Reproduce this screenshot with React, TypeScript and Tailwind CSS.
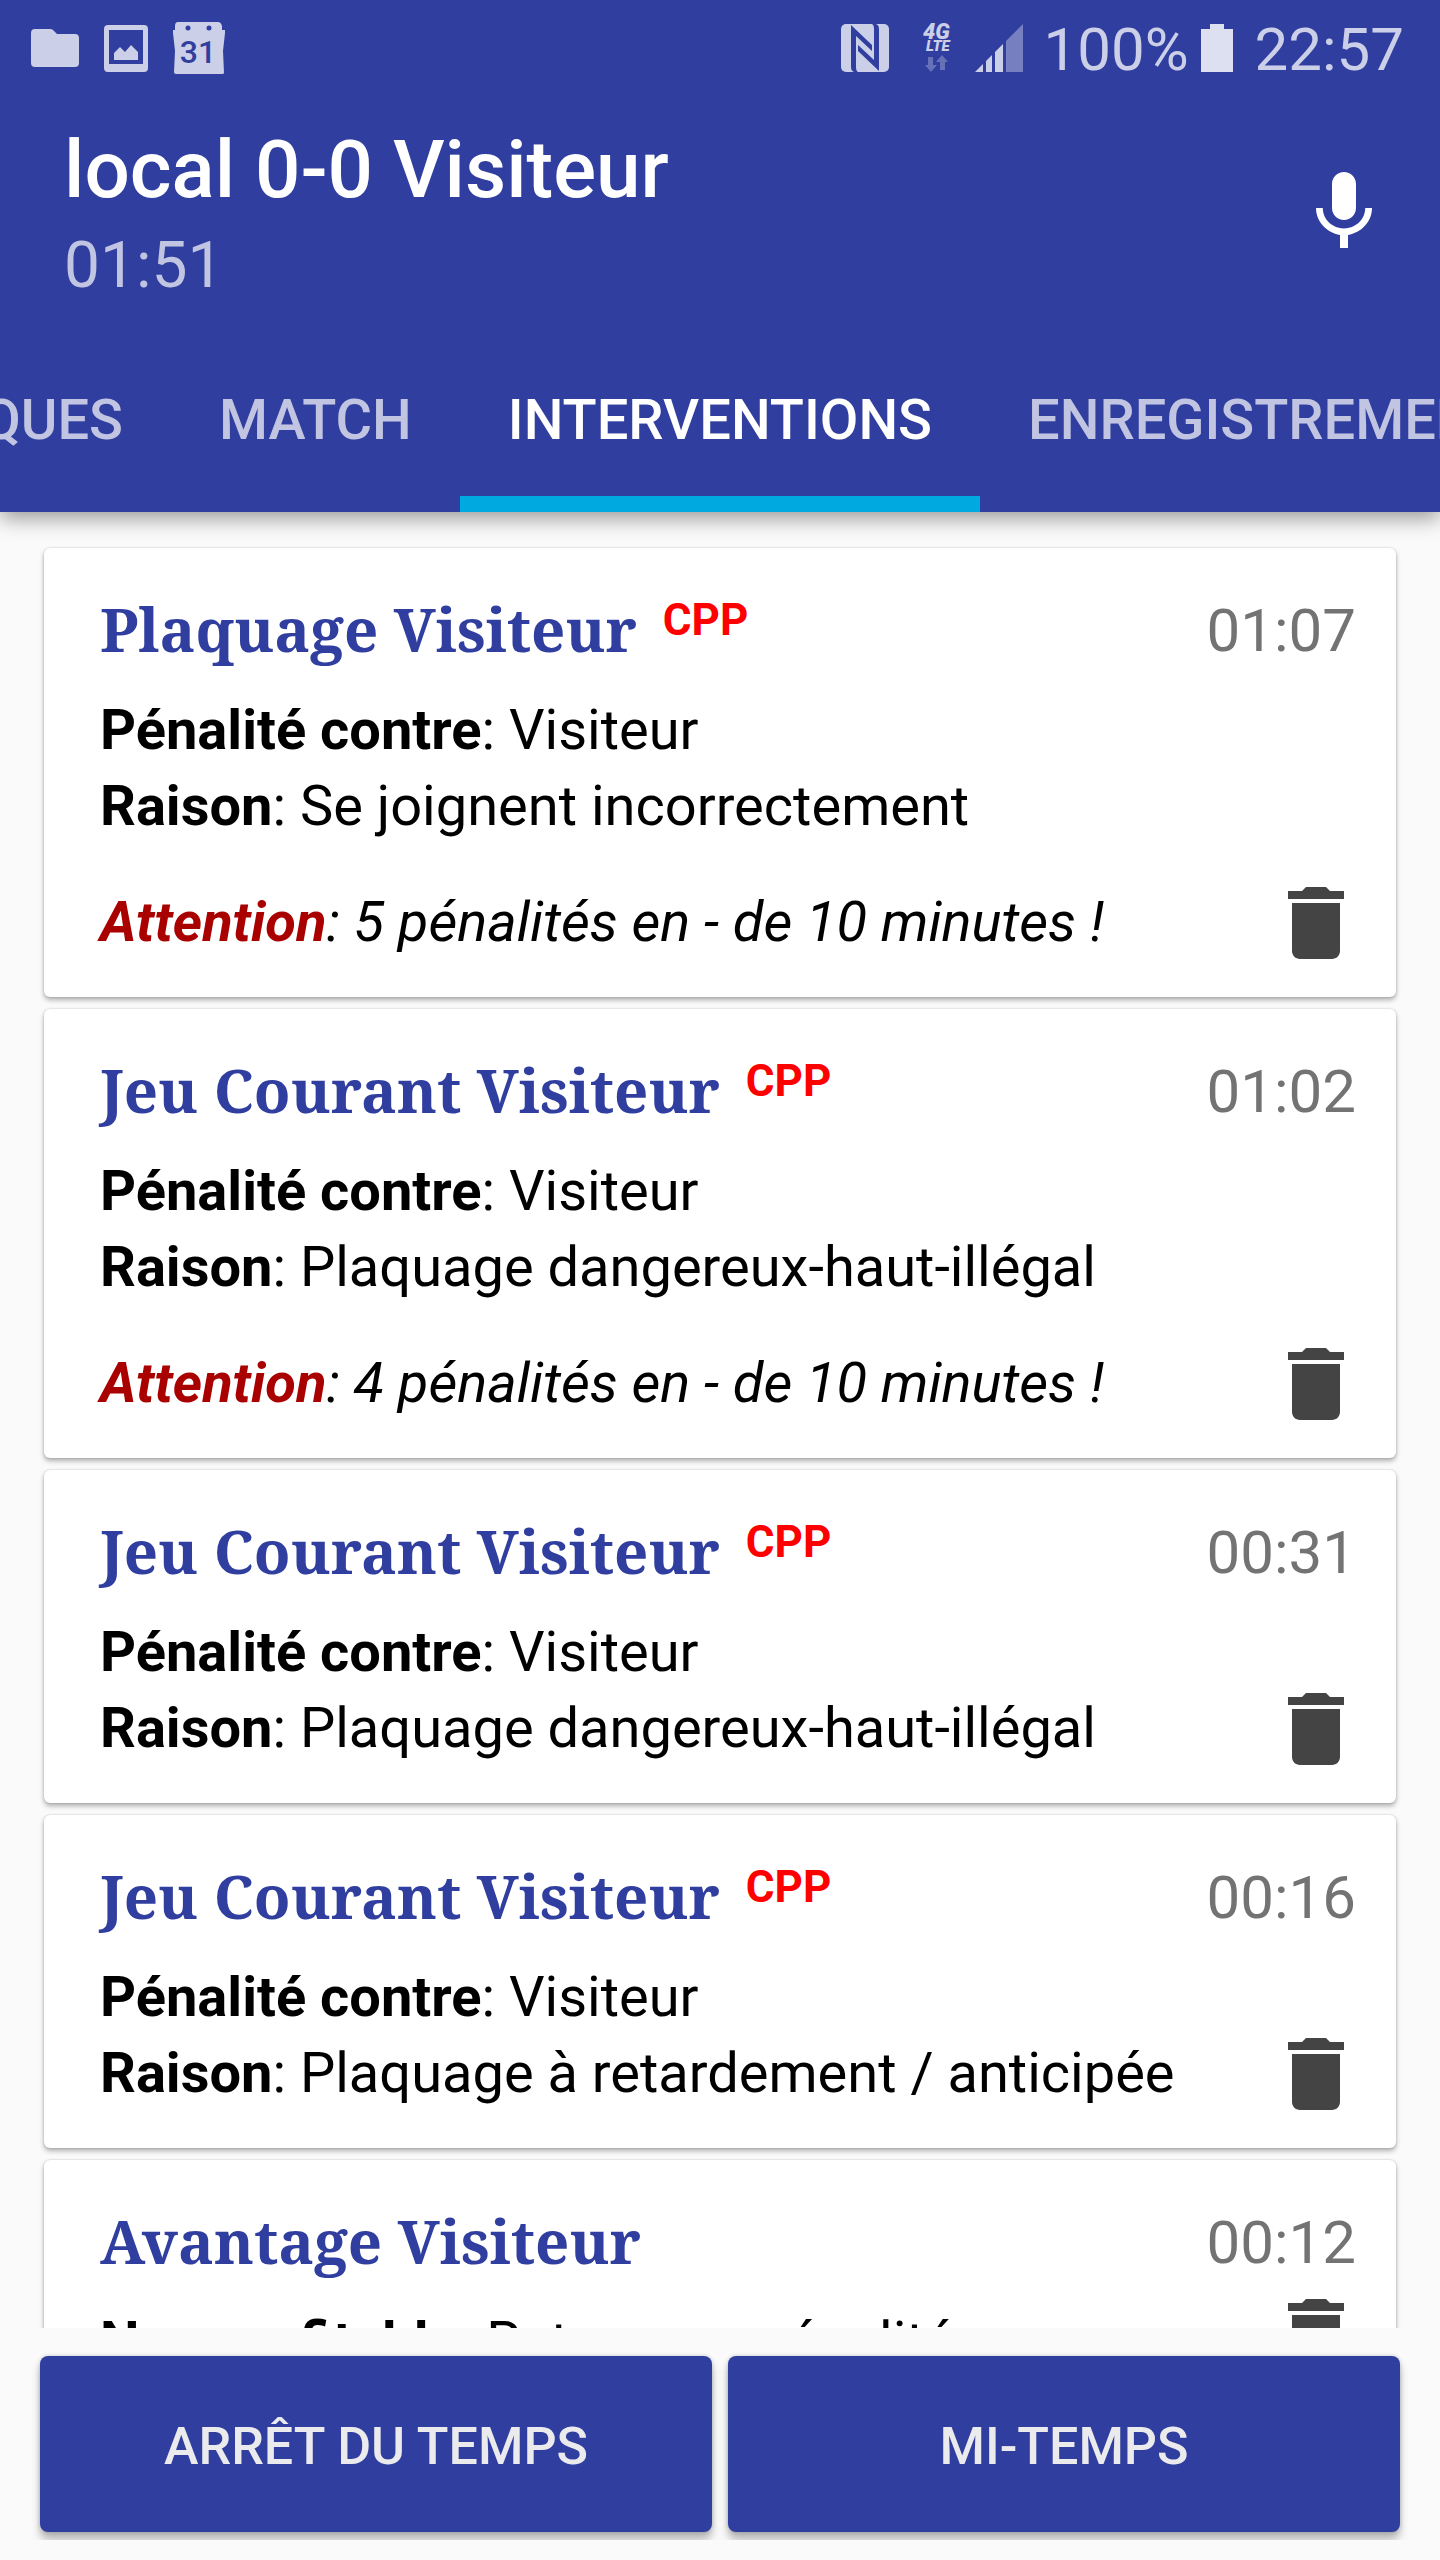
import { useState } from "react"

interface Intervention {
  id: number
  title: string
  cpp?: boolean
  time: string
  label: string
  value: string
  reason?: string
  warning?: string
}

const INTERVENTIONS: Intervention[] = [
  {
    id: 5,
    title: "Plaquage Visiteur",
    cpp: true,
    time: "01:07",
    label: "Pénalité contre",
    value: "Visiteur",
    reason: "Se joignent incorrectement",
    warning: "5 pénalités en - de 10 minutes !",
  },
  {
    id: 4,
    title: "Jeu Courant Visiteur",
    cpp: true,
    time: "01:02",
    label: "Pénalité contre",
    value: "Visiteur",
    reason: "Plaquage dangereux-haut-illégal",
    warning: "4 pénalités en - de 10 minutes !",
  },
  {
    id: 3,
    title: "Jeu Courant Visiteur",
    cpp: true,
    time: "00:31",
    label: "Pénalité contre",
    value: "Visiteur",
    reason: "Plaquage dangereux-haut-illégal",
  },
  {
    id: 2,
    title: "Jeu Courant Visiteur",
    cpp: true,
    time: "00:16",
    label: "Pénalité contre",
    value: "Visiteur",
    reason: "Plaquage à retardement / anticipée",
  },
  {
    id: 1,
    title: "Avantage Visiteur",
    time: "00:12",
    label: "Non profitable",
    value: "Retour sur pénalité",
  },
]

function StatusBar() {
  return (
    <div className="flex h-24 items-center justify-between pr-9 pl-[31px] text-[#cbcfe8]">
      <div className="flex items-center gap-[25px]">
        <svg className="h-[38px] w-12" viewBox="0 0 48 38" fill="currentColor">
          <path d="M4 0h15q2 0 3 1l4 4h18q4 0 4 4v25q0 4-4 4H4q-4 0-4-4V4q0-4 4-4z" />
        </svg>
        <svg className="h-[47px] w-11" viewBox="0 0 44 47" fill="currentColor">
          <path fillRule="evenodd" d="M4 0h36q4 0 4 4v39q0 4-4 4H4q-4 0-4-4V4q0-4 4-4zM5 5v34h34V5z" />
          <path d="M10 28l6-6 5 5 6-7 7 7v8H10z" />
        </svg>
        <svg className="h-13 w-13" viewBox="0 0 52 52" fill="currentColor">
          <path
            fillRule="evenodd"
            d="M5 0h40q3 0 4 4v4h3v3l-2 18 1 22q0 1-2 1H3q-2 0-2-2l1-21L0 11V8h2V4q0-4 3-4zM15 3.500a2.500 2.500 0 1 0 0 5 2.500 2.500 0 0 0 0-5zM36 3.500a2.500 2.500 0 1 0 0 5 2.500 2.500 0 0 0 0-5z"
          />
          <text x="25" y="41" textAnchor="middle" fontSize="32" fontWeight="500" fill="#303f9f">31</text>
        </svg>
      </div>
      <div className="flex items-center">
        {/* nfc */}
        <svg className="h-12 w-12" viewBox="0 0 48 48">
          <rect width="48" height="48" rx="5" fill="currentColor" />
          <g fill="#303f9f">
            <path d="M10 1L31 21v6L15 12v31q0 4 2 5h-4q-3-1-3-5z" />
            <path d="M38 47L17 27v-6l16 15V5q0-4-2-5h4q3 1 3 5z" />
          </g>
        </svg>
        <svg className="ml-[34px] h-12 w-8 overflow-visible" viewBox="0 0 32 48" fill="currentColor">
          <text x="0" y="15" fontSize="22" fontWeight="900" fontStyle="italic">4G</text>
          <text x="3" y="27" fontSize="15" fontWeight="900" fontStyle="italic">LTE</text>
          <path opacity=".35" d="M5 33h5v8h4l-6 7-6-7h3zM17 46v-8h-4l6-7 6 7h-3v8z" />
        </svg>
        <svg className="ml-5 h-12 w-12" viewBox="0 0 48 48" fill="currentColor">
          <path d="M0 48l8-8v8zM11 37l6-6v17h-6zM20 28l8-8v28h-8z" />
          <path opacity=".45" d="M31 17L48 0v48H31z" />
        </svg>
        <span className="ml-5 pt-1 text-[60px] leading-none">100%</span>
        <svg className="ml-3 h-12 w-8" viewBox="0 0 32 48" fill="#dde0f0">
          <path d="M9 0h14v5h9v43H0V5h9z" />
        </svg>
        <span className="ml-[22px] pt-1 text-[60px] leading-none">22:57</span>
      </div>
    </div>
  )
}

const tabClass =
  "flex h-48 shrink-0 items-center border-b-[16px] px-12 pt-6 text-[56px] font-medium uppercase"

function Tabs() {
  const [active, setActive] = useState("Interventions")

  const tab = (name: string) => (
    <button
      type="button"
      role="tab"
      aria-selected={active === name}
      onClick={() => setActive(name)}
      className={`${tabClass} ${
        active === name ? "border-[#00a9e0] text-white" : "border-transparent text-[#c1c5e2]"
      }`}
    >
      {name}
    </button>
  )

  return (
    <div role="tablist" className="flex overflow-hidden">
      {/* first tab is scrolled partly out of view */}
      <div className="flex w-[171px] shrink-0 justify-end overflow-hidden">{tab("Statistiques")}</div>
      {tab("Match")}
      {tab("Interventions")}
      {tab("Enregistrements")}
    </div>
  )
}

function Card({ item }: { item: Intervention }) {
  return (
    <li className="flex justify-between rounded-md bg-white pl-14 shadow-[0_3px_5px_rgba(0,0,0,0.3),0_0_2px_rgba(0,0,0,0.2)]">
      <div className="pt-10 pb-[29px] text-[56px] leading-[76px] whitespace-nowrap text-black">
        <div className="flex h-26 items-start">
          <h2 className="font-['Noto_Serif','DejaVu_Serif_Condensed','DejaVu_Serif',serif] text-[60px] leading-[82px] font-bold text-[#303f9f]">
            {item.title}
          </h2>
          {item.cpp && <span className="ml-[26px] text-[44px] leading-[64px] font-bold text-[#ff0000]">CPP</span>}
        </div>
        <p>
          <b>{item.label}</b>: {item.value}
        </p>
        {item.reason && (
          <p className="pb-2">
            <b>Raison</b>: {item.reason}
          </p>
        )}
        {item.warning && (
          <p className="pt-8 pb-2 italic">
            <b className="text-[#a90000]">Attention</b>: {item.warning}
          </p>
        )}
      </div>
      <div className="flex flex-col items-end justify-between pt-10 pr-8 pb-[26px]">
        <time className="pr-2 text-[60px] leading-[86px] text-[#737373]">{item.time}</time>
        <button type="button" aria-label="Supprimer">
          <svg className="size-24" viewBox="0 0 24 24" fill="#444">
            <path d="M6 19c0 1.100.9 2 2 2h8c1.100 0 2-.9 2-2V7H6v12zM19 4h-3.500l-1-1h-5l-1 1H5v2h14V4z" />
          </svg>
        </button>
      </div>
    </li>
  )
}

function ActionButton({ children }: { children: string }) {
  return (
    <button
      type="button"
      className="h-44 flex-1 rounded-lg bg-[#303f9f] pt-1.5 text-[52px] font-medium text-[#ebebee] uppercase shadow-[0_8px_8px_rgba(0,0,0,0.26),0_0_4px_rgba(0,0,0,0.2)]"
    >
      {children}
    </button>
  )
}

export default function App() {
  return (
    <div className="flex h-screen flex-col overflow-hidden bg-[#fafafa] font-[Roboto,sans-serif]">
      <header className="z-10 bg-[#303f9f] shadow-[0_6px_20px_rgba(0,0,0,0.4)]">
        <StatusBar />
        <div className="flex h-56 items-center justify-between pt-2 pr-12 pl-16">
          <div className="pt-2">
            <h1 className="text-[80px] leading-[100px] font-medium text-white">local 0-0 Visiteur</h1>
            <p className="text-[64px] leading-[92px] text-[#c1c5e2]">01:51</p>
          </div>
          <button type="button" aria-label="Enregistrer un mémo vocal">
            <svg className="size-24" viewBox="0 0 24 24" fill="#fff">
              <path d="M12 14c1.660 0 2.990-1.340 2.990-3L15 5c0-1.660-1.340-3-3-3S9 3.340 9 5v6c0 1.660 1.340 3 3 3zm5.300-3c0 3-2.540 5.100-5.300 5.100S6.700 14 6.700 11H5c0 3.410 2.720 6.230 6 6.720V21h2v-3.280c3.280-.48 6-3.300 6-6.720h-1.700z" />
            </svg>
          </button>
        </div>
        <Tabs />
      </header>

      <main className="min-h-0 flex-1 overflow-hidden px-11 pt-9">
        <ul className="flex flex-col gap-3">
          {INTERVENTIONS.map((item) => (
            <Card key={item.id} item={item} />
          ))}
        </ul>
      </main>

      <footer className="mb-5 flex gap-4 overflow-hidden px-10 pt-7 pb-2">
        <ActionButton>Arrêt du temps</ActionButton>
        <ActionButton>Mi-temps</ActionButton>
      </footer>
    </div>
  )
}
